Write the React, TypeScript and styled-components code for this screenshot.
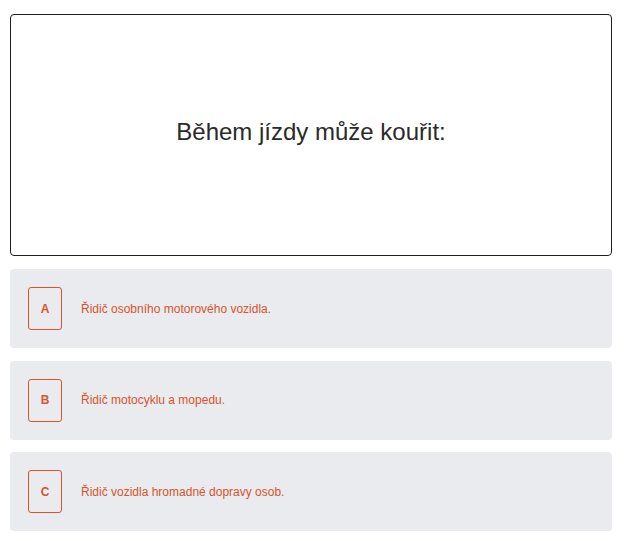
import React from 'react';
import styled, { createGlobalStyle } from 'styled-components';

const GlobalStyle = createGlobalStyle`
  html, body {
    margin: 0;
    padding: 0;
    background: #ffffff;
    font-family: "Liberation Sans", Arial, sans-serif;
  }
`;

const answers = [
  { letter: 'A', text: 'Řidič osobního motorového vozidla.' },
  { letter: 'B', text: 'Řidič motocyklu a mopedu.' },
  { letter: 'C', text: 'Řidič vozidla hromadné dopravy osob.' },
];

const App = () => {
  return (
    <>
      <GlobalStyle />
      <Wrapper>
        <Question>Během jízdy může kouřit:</Question>
        {answers.map((a) => (
          <Answer key={a.letter}>
            <Letter>{a.letter}</Letter>
            <AnswerText>{a.text}</AnswerText>
          </Answer>
        ))}
      </Wrapper>
    </>
  );
};

export default App;

const Wrapper = styled.div`
  display: flex;
  flex-direction: column;
  gap: 12.5px;
  padding: 14px 12px 0 10px;
`;

const Question = styled.div`
  height: 242px;
  box-sizing: border-box;
  margin-bottom: 0.5px;
  padding-bottom: 6px;
  border: 1px solid #1f1f1f;
  border-radius: 4px;
  display: flex;
  align-items: center;
  justify-content: center;
  font-size: 24px;
  line-height: 1;
  color: #2a2a2a;
`;

const Answer = styled.div`
  height: 79px;
  box-sizing: border-box;
  padding: 0 18px;
  display: flex;
  align-items: center;
  gap: 19px;
  background-color: #e9ebee;
  border-radius: 4px;
`;

const Letter = styled.div`
  width: 34px;
  height: 43px;
  box-sizing: border-box;
  border: 1px solid #d8542c;
  border-radius: 3px;
  display: flex;
  align-items: center;
  justify-content: center;
  font-size: 12px;
  font-weight: bold;
  color: #d8542c;
`;

const AnswerText = styled.span`
  font-size: 12px;
  color: #d8542c;
`;
